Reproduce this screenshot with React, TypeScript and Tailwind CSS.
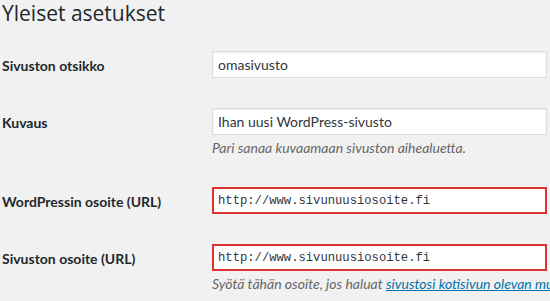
import React from "react";

type Row = {
  label: string;
  value: string;
  mono?: boolean;
  error?: boolean;
  hint?: React.ReactNode;
};

const rows: Row[] = [
  { label: "Sivuston otsikko", value: "omasivusto" },
  {
    label: "Kuvaus",
    value: "Ihan uusi WordPress-sivusto",
    hint: "Pari sanaa kuvaamaan sivuston aihealuetta.",
  },
  {
    label: "WordPressin osoite (URL)",
    value: "http://www.sivunuusiosoite.fi",
    mono: true,
    error: true,
  },
  {
    label: "Sivuston osoite (URL)",
    value: "http://www.sivunuusiosoite.fi",
    mono: true,
    error: true,
    hint: (
      <>
        Syötä tähän osoite, jos haluat{" "}
        <a href="#" className="text-[#0073aa] underline">
          sivustosi kotisivun olevan muu kuin WordPressin asennushakemisto
        </a>
        .
      </>
    ),
  },
];

const App: React.FC = () => {
  return (
    <div className="w-[550px] h-[301px] overflow-hidden bg-[#f1f1f1] text-[#23282d] font-['Lato',sans-serif]">
      <h1 className="pl-[2px] font-['Open_Sans',sans-serif] text-[21px] leading-[26px] font-normal">
        Yleiset asetukset
      </h1>

      {/* asetusrivit */}
      <div className="mt-[25px] flex flex-col">
        {rows.map((row) => (
          <div key={row.label} className="grid grid-cols-[212px_335px] pb-[30px]">
            <label className="pl-[2px] h-[27px] pt-[1px] flex items-center text-[14px] font-bold">
              {row.label}
            </label>
            <div className="flex flex-col">
              {row.error ? (
                <input
                  readOnly
                  value={row.value}
                  className="h-[27px] w-full bg-white px-[4px] border-2 border-[#dc3232] font-['Liberation_Mono',monospace] text-[12.2px] text-[#32373c] outline-none"
                />
              ) : (
                <input
                  readOnly
                  value={row.value}
                  className="h-[27px] w-full bg-white px-[5px] border border-[#dddddd] shadow-[inset_0_1px_2px_rgba(0,0,0,0.07)] text-[14px] text-[#32373c] outline-none"
                />
              )}
              {row.hint && (
                <p className="mt-[4px] leading-[18px] whitespace-nowrap text-[14px] italic text-[#666666]">
                  {row.hint}
                </p>
              )}
            </div>
          </div>
        ))}
      </div>
    </div>
  );
};

export default App;
